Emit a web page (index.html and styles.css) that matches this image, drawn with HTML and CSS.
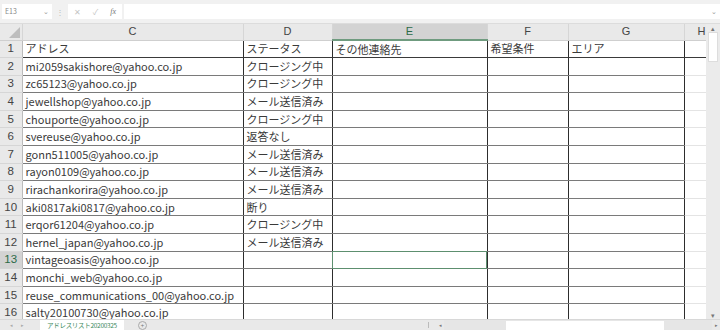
FILE: index.html
```html
<!DOCTYPE html>
<html lang="ja">
<head>
    <meta charset="UTF-8">
    <title>アドレスリスト</title>
    <link rel="stylesheet" href="styles.css">
</head>
<body>
    <div class="sheet-app">
        <div class="formula-bar">
            <div class="name-box">E13<span class="caret">⌄</span></div>
            <div class="dots">⋮</div>
            <div class="fx-buttons">
                <span>✕</span><span>✓</span><span class="fx">fx</span>
            </div>
            <div class="formula-input"><span class="caret">⌄</span></div>
        </div>

        <div class="grid-area">
            <table class="grid">
                <colgroup>
                    <col class="w-rh"><col class="w-c"><col class="w-d"><col class="w-e"><col class="w-f"><col class="w-g"><col class="w-h">
                </colgroup>
                <thead>
                    <tr>
                        <th class="corner"><span class="tri"></span></th>
                        <th>C</th><th>D</th><th class="sel">E</th><th>F</th><th>G</th><th class="h-head">H</th>
                    </tr>
                </thead>
                <tbody>
                    <tr class="first"><th>1</th><td>アドレス</td><td>ステータス</td><td>その他連絡先</td><td>希望条件</td><td>エリア</td><td class="out"></td></tr>
                    <tr><th>2</th><td>mi2059sakishore@yahoo.co.jp</td><td>クロージング中</td><td></td><td></td><td></td><td class="out"></td></tr>
                    <tr><th>3</th><td>zc65123@yahoo.co.jp</td><td>クロージング中</td><td></td><td></td><td></td><td class="out"></td></tr>
                    <tr><th>4</th><td>jewellshop@yahoo.co.jp</td><td>メール送信済み</td><td></td><td></td><td></td><td class="out"></td></tr>
                    <tr><th>5</th><td>chouporte@yahoo.co.jp</td><td>クロージング中</td><td></td><td></td><td></td><td class="out"></td></tr>
                    <tr><th>6</th><td>svereuse@yahoo.co.jp</td><td>返答なし</td><td></td><td></td><td></td><td class="out"></td></tr>
                    <tr><th>7</th><td>gonn511005@yahoo.co.jp</td><td>メール送信済み</td><td></td><td></td><td></td><td class="out"></td></tr>
                    <tr><th>8</th><td>rayon0109@yahoo.co.jp</td><td>メール送信済み</td><td></td><td></td><td></td><td class="out"></td></tr>
                    <tr><th>9</th><td>rirachankorira@yahoo.co.jp</td><td>メール送信済み</td><td></td><td></td><td></td><td class="out"></td></tr>
                    <tr><th>10</th><td>aki0817aki0817@yahoo.co.jp</td><td>断り</td><td></td><td></td><td></td><td class="out"></td></tr>
                    <tr><th>11</th><td>erqor61204@yahoo.co.jp</td><td>クロージング中</td><td></td><td></td><td></td><td class="out"></td></tr>
                    <tr><th>12</th><td>hernel_japan@yahoo.co.jp</td><td>メール送信済み</td><td></td><td></td><td></td><td class="out"></td></tr>
                    <tr class="cur"><th>13</th><td>vintageoasis@yahoo.co.jp</td><td></td><td class="active"></td><td></td><td></td><td class="out"></td></tr>
                    <tr><th>14</th><td>monchi_web@yahoo.co.jp</td><td></td><td></td><td></td><td></td><td class="out"></td></tr>
                    <tr><th>15</th><td>reuse_communications_00@yahoo.co.jp</td><td></td><td></td><td></td><td></td><td class="out"></td></tr>
                    <tr><th>16</th><td>salty20100730@yahoo.co.jp</td><td></td><td></td><td></td><td></td><td class="out"></td></tr>
                </tbody>
            </table>

            <div class="vscroll">
                <span class="arrow">▴</span>
                <div class="thumb"></div>
                <span class="arrow bottom">▾</span>
            </div>
        </div>

        <div class="tab-bar">
            <div class="tab-nav"><span>◂</span><span>▸</span></div>
            <div class="tab">アドレスリスト20200325</div>
            <div class="add-sheet">+</div>
            <div class="hscroll">
                <span class="split"></span>
                <span class="arrow">◂</span>
                <div class="track"><div class="thumb"></div></div>
                <span class="arrow">▸</span>
            </div>
        </div>
    </div>
</body>
</html>
```

FILE: styles.css
```css
body {
    margin: 0;
    background-color: #ffffff;
    font-family: "Noto Sans CJK JP", "Noto Sans", sans-serif;
    color: #333;
}
.sheet-app {
    width: 720px;
    height: 330px;
    overflow: hidden;
    display: flex;
    flex-direction: column;
    background-color: #f0f0f0;
}

/* formula bar */
.formula-bar {
    height: 24px;
    flex-shrink: 0;
    display: flex;
    align-items: center;
    padding: 0 0 0 2px;
    box-sizing: border-box;
    background-color: #f1f1f1;
    border-bottom: 1px solid #dcdcdc;
}
.name-box {
    width: 50px;
    height: 15px;
    background-color: #fff;
    font-size: 7px;
    line-height: 15px;
    color: #888;
    padding-left: 3px;
    box-sizing: border-box;
    display: flex;
    align-items: center;
    justify-content: space-between;
}
.caret {
    font-size: 7px;
    color: #999;
    padding-right: 3px;
    line-height: 1;
}
.dots {
    width: 16px;
    text-align: center;
    font-size: 8px;
    line-height: 10px;
    color: #bbb;
}
.fx-buttons {
    width: 54px;
    height: 15px;
    background-color: #fff;
    display: flex;
    align-items: center;
    justify-content: space-around;
    font-size: 8px;
    line-height: 15px;
    color: #c4c4c4;
}
.fx-buttons .fx {
    font-style: italic;
    font-family: "Liberation Serif", serif;
    color: #777;
}
.formula-input {
    flex: 1;
    height: 15px;
    margin-left: 2px;
    background-color: #fff;
    display: flex;
    align-items: center;
    justify-content: flex-end;
}

/* grid */
.grid-area {
    flex: 1;
    min-height: 0;
    display: flex;
    background-color: #fff;
    overflow: hidden;
}
.grid {
    border-collapse: collapse;
    table-layout: fixed;
    width: 706px;
    font-size: 11px;
}
.w-rh { width: 22px; }
.w-c { width: 221px; }
.w-d { width: 89px; }
.w-e { width: 155px; }
.w-f { width: 81px; }
.w-g { width: 116px; }
.w-h { width: 22px; }

.grid thead th {
    height: 15px;
    padding: 0;
    font-weight: normal;
    font-family: "Liberation Sans", "Noto Sans", sans-serif;
    font-size: 11px;
    line-height: 15px;
    color: #444;
    background-color: #e9e9e9;
    border-left: 1px solid #d6d6d6;
    border-bottom: 1px solid #cfcfcf;
    vertical-align: middle;
}
.grid thead th.sel {
    background-color: #d3d3d3;
    color: #2b6a46;
    border-bottom: 2px solid #6f9b7f;
}
.grid thead th.h-head {
    text-align: left;
    padding-left: 13px;
    overflow: hidden;
}
.grid thead th.corner {
    position: relative;
    border-left: none;
}
.tri {
    position: absolute;
    right: 2px;
    bottom: 2px;
    width: 0;
    height: 0;
    border-left: 11px solid transparent;
    border-bottom: 11px solid #bdbdbd;
}

.grid tbody tr {
    height: 17.6px;
}
.grid tbody th {
    padding: 0;
    font-weight: normal;
    font-family: "Liberation Sans", "Noto Sans", sans-serif;
    font-size: 11.5px;
    line-height: 15px;
    color: #444;
    background-color: #e9e9e9;
    border-bottom: 1px solid #d6d6d6;
    border-right: 1px solid #bbb;
    text-align: center;
}
.grid tbody tr.cur th {
    background-color: #d3d3d3;
    color: #2b6a46;
}
.grid td {
    padding: 0 0 0 3px;
    white-space: nowrap;
    overflow: hidden;
    border-left: 1px solid #2d2d2d;
    border-right: 1px solid #2d2d2d;
    border-bottom: 1px solid #7a7a7a;
    color: #3a3a3a;
    line-height: 15px;
}
.grid tr.first td {
    border-bottom: 1px solid #3a3a3a;
}
.grid td.out {
    border-left: 1px solid #2d2d2d;
    border-right: none;
    border-bottom: 1px solid #e4e4e4;
}
.grid td.active {
    outline: 1px solid #5d8f6f;
    outline-offset: -1px;
}

.vscroll {
    width: 14px;
    flex-shrink: 0;
    background-color: #ebebeb;
    display: flex;
    flex-direction: column;
    align-items: center;
}
.vscroll .arrow {
    font-size: 7px;
    color: #777;
    line-height: 8px;
}
.vscroll .arrow.bottom {
    margin-top: auto;
}
.vscroll .thumb {
    width: 10px;
    height: 30px;
    background-color: #fff;
    border: 1px solid #ddd;
    box-sizing: border-box;
}

/* sheet tabs */
.tab-bar {
    height: 10px;
    flex-shrink: 0;
    display: flex;
    align-items: center;
    background-color: #e9e9e9;
    font-size: 7px;
    line-height: 10px;
    border-top: 1px solid #d8d8d8;
}
.tab-nav {
    width: 40px;
    display: flex;
    gap: 8px;
    padding-left: 10px;
    box-sizing: border-box;
    color: #aaa;
    font-size: 5px;
}
.tab {
    width: 84px;
    height: 10px;
    background-color: #fff;
    color: #3d8a5e;
    font-size: 6.5px;
    line-height: 10px;
    text-align: center;
    letter-spacing: -0.3px;
    overflow: hidden;
    white-space: nowrap;
}
.add-sheet {
    margin-left: 14px;
    width: 7px;
    height: 7px;
    border: 1px solid #aaa;
    border-radius: 50%;
    font-size: 6px;
    line-height: 7px;
    text-align: center;
    color: #777;
}
.hscroll {
    margin-left: auto;
    width: 292px;
    height: 10px;
    display: flex;
    align-items: center;
}
.hscroll .split {
    width: 1px;
    height: 6px;
    background-color: #bbb;
    margin-right: 7px;
}
.hscroll .arrow {
    font-size: 5px;
    color: #777;
    width: 8px;
    text-align: center;
}
.hscroll .track {
    flex: 1;
    height: 10px;
    background-color: #e6e6e6;
    position: relative;
}
.hscroll .thumb {
    position: absolute;
    left: 62px;
    width: 158px;
    top: 1px;
    bottom: 0;
    background-color: #fff;
}
```
